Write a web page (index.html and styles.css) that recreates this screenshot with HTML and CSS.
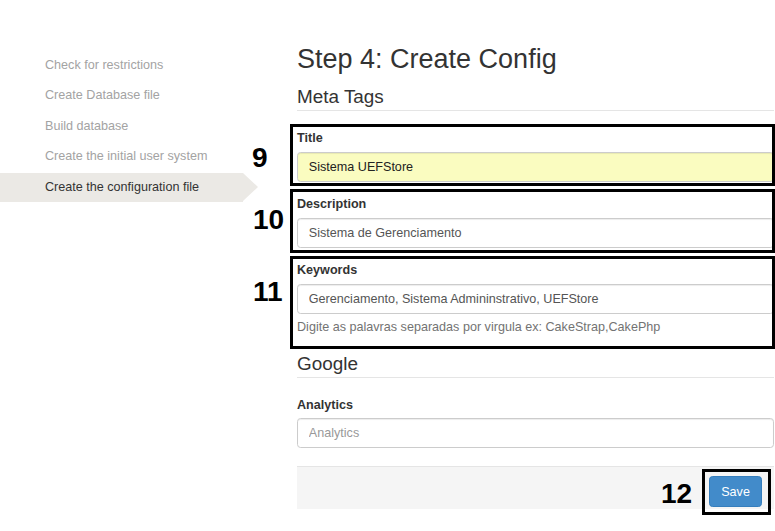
FILE: index.html
```html
<!DOCTYPE html>
<html lang="en">
<head>
<meta charset="utf-8">
<title>Step 4: Create Config</title>
<link rel="stylesheet" href="styles.css">
</head>
<body>
<div class="page">
  <nav class="steps">
    <a class="step">Check for restrictions</a>
    <a class="step">Create Database file</a>
    <a class="step">Build database</a>
    <a class="step">Create the initial user system</a>
    <a class="step active">Create the configuration file</a>
  </nav>
  <main class="main">
    <h2 class="title">Step 4: Create Config</h2>
    <form class="form">
      <div class="legend">Meta Tags</div>
      <div class="group g-title">
        <label class="label">Title</label>
        <input class="input autofill" type="text" value="Sistema UEFStore">
        <span class="mark m-title"></span>
        <span class="num n-title">9</span>
      </div>
      <div class="group g-desc">
        <label class="label">Description</label>
        <input class="input" type="text" value="Sistema de Gerenciamento">
        <span class="mark m-desc"></span>
        <span class="num n-desc">10</span>
      </div>
      <div class="group g-keys">
        <label class="label">Keywords</label>
        <input class="input" type="text" value="Gerenciamento, Sistema Admininstrativo, UEFStore">
        <p class="help">Digite as palavras separadas por virgula ex: CakeStrap,CakePhp</p>
        <span class="mark m-keys"></span>
        <span class="num n-keys">11</span>
      </div>
      <div class="legend legend-google">Google</div>
      <div class="group g-analytics">
        <label class="label">Analytics</label>
        <input class="input" type="text" placeholder="Analytics">
      </div>
      <div class="actions">
        <span class="btn-wrap">
          <button class="btn" type="button">Save</button>
          <span class="mark m-save"></span>
          <span class="num n-save">12</span>
        </span>
      </div>
    </form>
  </main>
</div>
</body>
</html>
```
FILE: styles.css
```css
* { box-sizing: border-box; }

body {
  margin: 0;
  background: #fff;
  font-family: "Liberation Sans", Arial, sans-serif;
  font-size: 12.6px;
  line-height: 18px;
  color: #333;
}

.page {
  display: grid;
  grid-template-columns: 243px 477px;
  column-gap: 54px;
  width: 775px;
  height: 531px;
  overflow: hidden;
}

/* sidebar */
.steps {
  display: flex;
  flex-direction: column;
  gap: 1px;
  padding-top: 50.5px;
}

.step {
  display: block;
  position: relative;
  height: 29.5px;
  line-height: 29.5px;
  padding-left: 45px;
  color: #a3a3a3;
  white-space: nowrap;
}

.step.active {
  background: #ebe9e5;
  color: #333;
}

.step.active::after {
  content: "";
  position: absolute;
  left: 100%;
  top: 0;
  border-left: 15px solid #ebe9e5;
  border-top: 14.75px solid transparent;
  border-bottom: 14.75px solid transparent;
}

/* main */
.main {
  padding-top: 44.6px;
}

.title {
  margin: 0 0 9px;
  font-size: 27px;
  line-height: 29.7px;
  font-weight: normal;
  color: #333;
}

.form { margin: 0; }

.legend {
  font-size: 18.9px;
  line-height: 27px;
  color: #333;
  border-bottom: 1px solid #e5e5e5;
  margin-bottom: 18px;
}

.group {
  position: relative;
  margin-bottom: 13.5px;
}

.g-analytics { margin-bottom: 18px; }

.label {
  display: block;
  font-weight: bold;
  margin-bottom: 4.5px;
  color: #333;
}

.input {
  display: block;
  width: 100%;
  height: 30px;
  padding: 5px 10.8px;
  font-family: inherit;
  font-size: 12.6px;
  color: #555;
  background: #fff;
  border: 1px solid #ccc;
  border-radius: 3.6px;
  box-shadow: inset 0 1px 1px rgba(0, 0, 0, .075);
  outline: none;
}

.input::placeholder { color: #999; }

.input.autofill {
  background: #fafcc0;
  color: #222;
}

.help {
  margin: 4.5px 0 0;
  color: #737373;
}

.actions {
  border-top: 1px solid #e5e5e5;
  background: #f5f5f5;
  padding: 9.2px 12.3px 2.3px;
  text-align: right;
}

.btn-wrap {
  position: relative;
  display: inline-block;
  vertical-align: top;
}

.btn {
  display: block;
  height: 30.7px;
  padding: 0 10.8px;
  font-family: inherit;
  font-size: 12.6px;
  color: #fff;
  background: #428bca;
  border: 1px solid #357ebd;
  border-radius: 3.6px;
}

/* annotation overlays */
.mark {
  position: absolute;
  border: 3px solid #000;
  pointer-events: none;
}

.m-title { top: -5.5px; left: -7px; right: -1.3px; bottom: -4.7px; }
.m-desc  { top: -6.1px; left: -7px; right: -1.3px; bottom: -5.2px; }
.m-keys  { top: -5.8px; left: -7px; right: -1.3px; bottom: -13.2px; }
.m-save  { top: -7.7px; left: -7px; right: -9.3px; bottom: -7.6px; }

.num {
  position: absolute;
  font-family: "Liberation Sans", Arial, sans-serif;
  font-weight: bold;
  font-size: 28px;
  line-height: 28px;
  color: #000;
  white-space: nowrap;
}

.n-title { left: -45px; top: 14.3px; }
.n-desc  { left: -44px; top: 10.3px; }
.n-keys  { left: -44px; top: 16.7px; }
.n-save  { left: -48.5px; top: 3.1px; }
```
